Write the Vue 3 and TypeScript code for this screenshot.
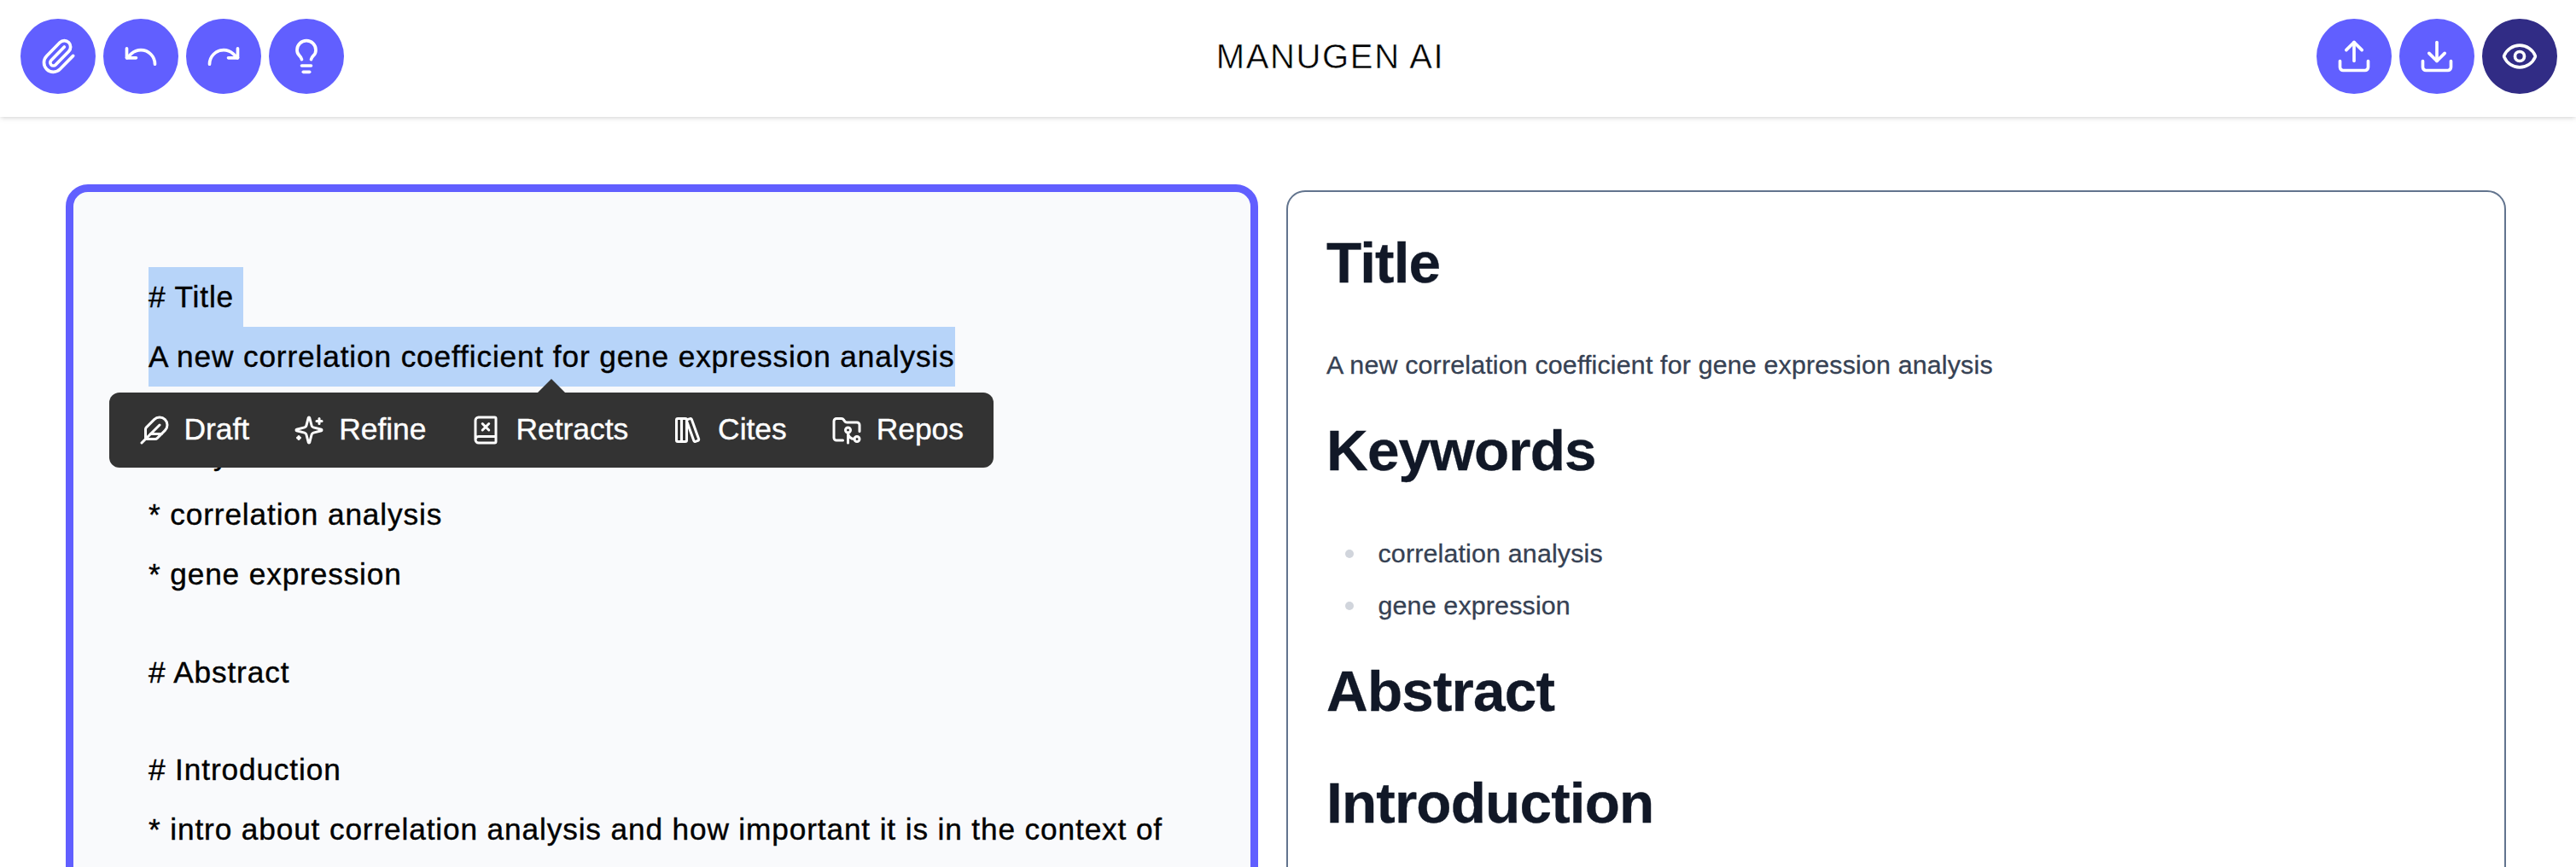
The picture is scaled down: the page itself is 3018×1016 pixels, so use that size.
<script setup lang="ts">
interface IconShape {
  paths: string[]
  circles?: [number, number, number][]
}

interface Action {
  label: string
  icon: IconShape
  active?: boolean
}

const editActions: Action[] = [
  {
    label: 'Attach',
    icon: {
      paths: [
        'm16 6-8.414 8.586a2 2 0 0 0 2.829 2.829l8.414-8.586a4 4 0 1 0-5.657-5.657l-8.379 8.551a6 6 0 1 0 8.485 8.485l8.379-8.551',
      ],
    },
  },
  { label: 'Undo', icon: { paths: ['M3 7v6h6', 'M21 17a9 9 0 0 0-9-9 9 9 0 0 0-6 2.3L3 13'] } },
  { label: 'Redo', icon: { paths: ['M21 7v6h-6', 'M3 17a9 9 0 0 1 9-9 9 9 0 0 1 6 2.3l3 2.7'] } },
  {
    label: 'Example',
    icon: {
      paths: [
        'M15 14c.2-1 .7-1.7 1.5-2.5 1-.9 1.5-2.2 1.5-3.5A6 6 0 0 0 6 8c0 1 .2 2.2 1.5 3.5.7.7 1.3 1.5 1.5 2.5',
        'M9 18h6',
        'M10 22h4',
      ],
    },
  },
]

const fileActions: Action[] = [
  {
    label: 'Upload',
    icon: { paths: ['M12 3v12', 'm17 8-5-5-5 5', 'M21 15v4a2 2 0 0 1-2 2H5a2 2 0 0 1-2-2v-4'] },
  },
  {
    label: 'Download',
    icon: { paths: ['M12 15V3', 'm7 10 5 5 5-5', 'M21 15v4a2 2 0 0 1-2 2H5a2 2 0 0 1-2-2v-4'] },
  },
  {
    label: 'Preview',
    active: true,
    icon: {
      paths: [
        'M2.062 12.348a1 1 0 0 1 0-.696 10.75 10.75 0 0 1 19.876 0 1 1 0 0 1 0 .696 10.75 10.75 0 0 1-19.876 0',
      ],
      circles: [[12, 12, 3]],
    },
  },
]

const agents: Action[] = [
  {
    label: 'Draft',
    icon: {
      paths: [
        'M12.67 19a2 2 0 0 0 1.416-.588l6.154-6.172a6 6 0 0 0-8.49-8.49L5.586 9.914A2 2 0 0 0 5 11.328V18a1 1 0 0 0 1 1z',
        'M16 8 2 22',
        'M17.5 15H9',
      ],
    },
  },
  {
    label: 'Refine',
    icon: {
      paths: [
        'M9.937 15.5A2 2 0 0 0 8.5 14.063l-6.135-1.582a.5.5 0 0 1 0-.962L8.5 9.936A2 2 0 0 0 9.937 8.5l1.582-6.135a.5.5 0 0 1 .963 0L14.063 8.5A2 2 0 0 0 15.5 9.937l6.135 1.581a.5.5 0 0 1 0 .964L15.5 14.063a2 2 0 0 0-1.437 1.437l-1.582 6.135a.5.5 0 0 1-.963 0z',
        'M20 3v4',
        'M22 5h-4',
        'M4 17v2',
        'M5 18H3',
      ],
    },
  },
  {
    label: 'Retracts',
    icon: {
      paths: [
        'm14.5 7-5 5',
        'M4 19.5v-15A2.5 2.5 0 0 1 6.5 2H19a1 1 0 0 1 1 1v18a1 1 0 0 1-1 1H6.5a1 1 0 0 1 0-5H20',
        'm9.5 7 5 5',
      ],
    },
  },
  {
    label: 'Cites',
    icon: {
      paths: [
        'M4 3h6a1 1 0 0 1 1 1v16a1 1 0 0 1-1 1H4a1 1 0 0 1-1-1V4a1 1 0 0 1 1-1z',
        'M7 3v18',
        'M20.4 18.9c.2.5-.1 1.1-.6 1.3l-1.9.7c-.5.2-1.1-.1-1.3-.6L11.1 5.1c-.2-.5.1-1.1.6-1.3l1.9-.7c.5-.2 1.1.1 1.3.6Z',
      ],
    },
  },
  {
    label: 'Repos',
    icon: {
      paths: [
        'M9 20H4a2 2 0 0 1-2-2V5a2 2 0 0 1 2-2h3.9a2 2 0 0 1 1.69.9l.81 1.2a2 2 0 0 0 1.67.9H20a2 2 0 0 1 2 2v5',
        'M18 19c-2.8 0-5-2.2-5-5v8',
      ],
      circles: [
        [13, 12, 2],
        [20, 19, 2],
      ],
    },
  },
]

interface Line {
  text: string
  selected?: boolean
  newline?: boolean
}

const lines: Line[] = [
  { text: '# Title', selected: true, newline: true },
  { text: 'A new correlation coefficient for gene expression analysis', selected: true },
  { text: '' },
  { text: '# Keywords' },
  { text: '* correlation analysis' },
  { text: '* gene expression' },
  { text: '' },
  { text: '# Abstract' },
  { text: '' },
  { text: '# Introduction' },
  { text: '* intro about correlation analysis and how important it is in the context of' },
]

const keywords: string[] = ['correlation analysis', 'gene expression']
</script>

<template>
  <div class="app">
    <header class="header">
      <div class="group">
        <button v-for="a in editActions" :key="a.label" class="round" :aria-label="a.label">
          <svg class="icon" viewBox="0 0 24 24">
            <path v-for="d in a.icon.paths" :key="d" :d="d" />
          </svg>
        </button>
      </div>
      <div class="brand">MANUGEN AI</div>
      <div class="group">
        <button
          v-for="a in fileActions"
          :key="a.label"
          class="round"
          :class="{ active: a.active }"
          :aria-label="a.label"
        >
          <svg class="icon" viewBox="0 0 24 24">
            <path v-for="d in a.icon.paths" :key="d" :d="d" />
            <circle v-for="(c, i) in a.icon.circles" :key="i" :cx="c[0]" :cy="c[1]" :r="c[2]" />
          </svg>
        </button>
      </div>
    </header>

    <main class="main">
      <section class="editor">
        <div v-for="(line, i) in lines" :key="i" class="line" :class="{ blank: !line.text }">
          <span :class="{ selected: line.selected, newline: line.newline }">{{ line.text }}</span>
        </div>
        <div class="toolbar">
          <div v-for="a in agents" :key="a.label" class="agent">
            <svg class="icon small" viewBox="0 0 24 24">
              <path v-for="d in a.icon.paths" :key="d" :d="d" />
              <circle v-for="(c, n) in a.icon.circles" :key="n" :cx="c[0]" :cy="c[1]" :r="c[2]" />
            </svg>
            <span>{{ a.label }}</span>
          </div>
        </div>
      </section>

      <section class="preview">
        <h1>Title</h1>
        <p>A new correlation coefficient for gene expression analysis</p>
        <h1>Keywords</h1>
        <ul>
          <li v-for="k in keywords" :key="k">{{ k }}</li>
        </ul>
        <h1>Abstract</h1>
        <h1>Introduction</h1>
      </section>
    </main>
  </div>
</template>

<style>
body {
  margin: 0;
  background: #fff;
}
</style>

<style scoped>
.app {
  display: flex;
  flex-direction: column;
  height: 1016px;
  overflow: hidden;
  background: #fff;
  color: #000;
  font-family: 'Liberation Sans', Helvetica, Arial, sans-serif;
}

.header {
  display: flex;
  flex: none;
  align-items: flex-start;
  justify-content: space-between;
  box-sizing: border-box;
  height: 137px;
  padding: 22px 22px 0 24px;
  box-shadow: 0 2px 6px rgba(0, 0, 0, 0.1), 0 2px 4px -2px rgba(0, 0, 0, 0.1);
}

.group {
  display: flex;
  gap: 9px;
}

.round {
  display: flex;
  align-items: center;
  justify-content: center;
  width: 88px;
  height: 88px;
  padding: 0;
  border: 0;
  border-radius: 50%;
  background: #615fff;
  color: #fff;
}

.round.active {
  background: #312c85;
}

.icon {
  width: 44px;
  height: 44px;
  fill: none;
  stroke: currentColor;
  stroke-width: 2;
  stroke-linecap: round;
  stroke-linejoin: round;
}

.icon.small {
  flex: none;
  width: 36px;
  height: 36px;
}

.brand {
  font-size: 40px;
  line-height: 88px;
  letter-spacing: 1.65px;
  -webkit-text-stroke: 0.5px #fff;
}

.main {
  display: flex;
  flex: 1;
  align-items: stretch;
  gap: 33px;
  padding: 79px 82px 0 77px;
}

.editor {
  position: relative;
  flex: none;
  box-sizing: border-box;
  width: 1397px;
  height: 960px;
  padding: 88px;
  border: 9px solid #615fff;
  border-radius: 26px;
  background: #f9fafc;
  font-size: 35.2px;
  letter-spacing: 0.885px;
  -webkit-text-stroke: 0.4px currentColor;
}

.line {
  height: 70px;
  line-height: 70px;
  white-space: nowrap;
}

.line.blank {
  height: 44.8px;
}

.selected {
  display: inline-block;
  height: 70px;
  background: #b7d4f9;
}

.newline {
  padding-right: 11px;
}

.toolbar {
  position: absolute;
  top: 235px;
  left: 42px;
  display: flex;
  align-items: center;
  justify-content: space-between;
  box-sizing: border-box;
  width: 1036px;
  height: 88px;
  padding: 0 35px 0 34.5px;
  border-radius: 12px;
  background: #333;
  color: #fff;
  font-size: 35.4px;
  letter-spacing: 0;
}

.toolbar::before {
  content: '';
  position: absolute;
  top: -16px;
  left: 502px;
  border: solid transparent;
  border-width: 0 16px 16px;
  border-bottom-color: #333;
}

.agent {
  display: flex;
  align-items: center;
  gap: 17px;
  line-height: 86px;
}

.agent span {
  padding-bottom: 2px;
}

.preview {
  flex: 1;
  box-sizing: border-box;
  height: 960px;
  margin-top: 7px;
  padding: 45px;
  border: 2px solid #62748e;
  border-radius: 22px;
  background: #fff;
  color: #364153;
  font-size: 30.4px;
  line-height: 52.5px;
  letter-spacing: 0.16px;
  -webkit-text-stroke: 0.3px currentColor;
}

.preview h1 {
  margin: 36.4px 0 56.4px;
  color: #111827;
  font-size: 67.5px;
  font-weight: 700;
  line-height: 75px;
  letter-spacing: -0.85px;
}

.preview h1:first-child {
  margin-top: 0;
}

.preview p {
  margin: 0;
}

.preview ul {
  display: flex;
  flex-direction: column;
  gap: 8.5px;
  margin: 0;
  padding: 0 0 0 22px;
  list-style: none;
}

.preview li {
  display: flex;
  align-items: center;
  gap: 28.5px;
}

.preview li::before {
  content: '';
  width: 10px;
  height: 10px;
  margin-top: 3px;
  border-radius: 50%;
  background: #d1d5dc;
}
</style>
